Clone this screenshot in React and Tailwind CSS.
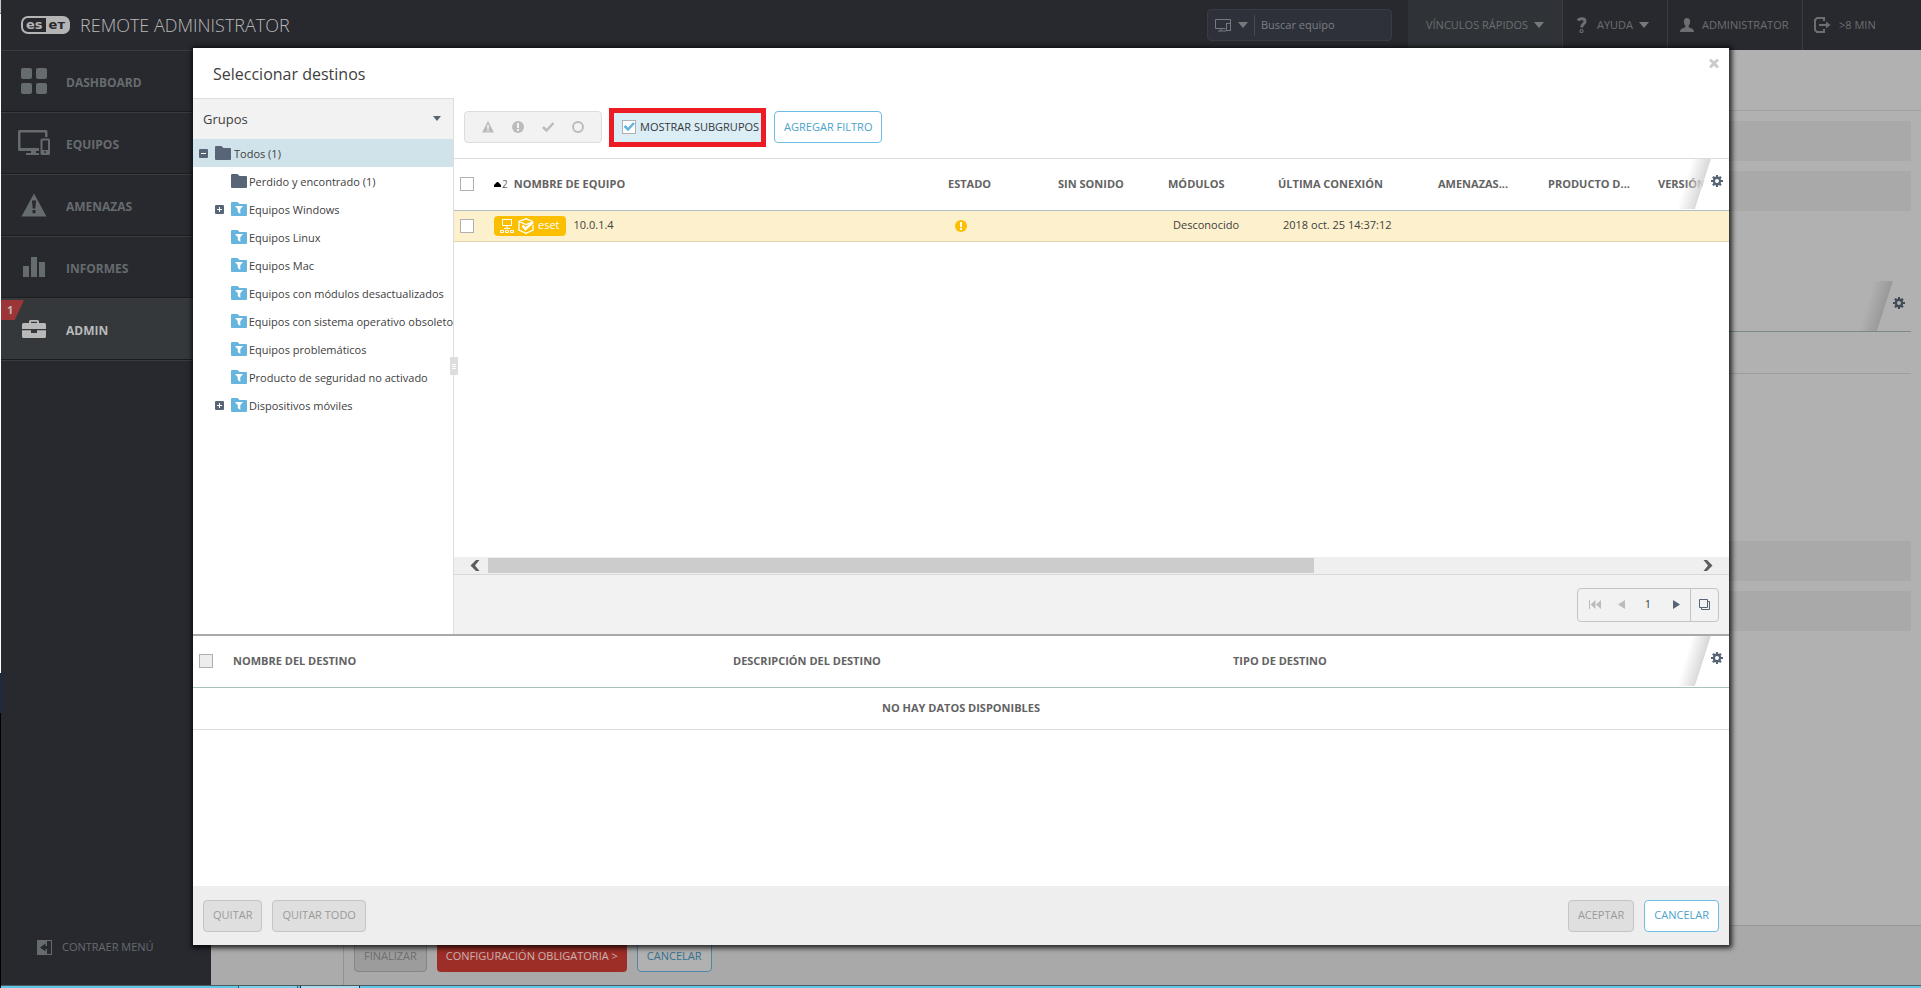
import React, { useState } from 'react';

const menuItems = [
    { label: 'DASHBOARD', icon: 'dashboard' },
    { label: 'EQUIPOS', icon: 'computers' },
    { label: 'AMENAZAS', icon: 'threats' },
    { label: 'INFORMES', icon: 'reports' },
    { label: 'ADMIN', icon: 'admin', badge: 1 }
];

const groups = [
    { name: 'Perdido y encontrado (1)' },
    { name: 'Equipos Windows', dynamic: true, expandable: true },
    { name: 'Equipos Linux', dynamic: true },
    { name: 'Equipos Mac', dynamic: true },
    { name: 'Equipos con módulos desactualizados', dynamic: true },
    { name: 'Equipos con sistema operativo obsoleto', dynamic: true },
    { name: 'Equipos problemáticos', dynamic: true },
    { name: 'Producto de seguridad no activado', dynamic: true },
    { name: 'Dispositivos móviles', dynamic: true, expandable: true }
];

const MenuIcon = ({ name }) => {
    if (name === 'dashboard') {
        return (
            <svg width="26" height="26" viewBox="0 0 26 26" fill="currentColor">
                <rect width="11" height="11" rx="2" />
                <rect x="15" width="11" height="11" rx="2" />
                <rect y="15" width="11" height="11" rx="2" />
                <rect x="15" y="15" width="11" height="11" rx="2" />
            </svg>
        );
    }
    if (name === 'computers') {
        return (
            <svg width="32" height="26" viewBox="0 0 32 26" fill="currentColor">
                <path fillRule="evenodd" d="M1.500 0H28a1.500 1.500 0 0 1 1.500 1.500V7h-2.500V2.500H2.500V18H21v3h-3v2h3v2H8v-2h5v-2H1.500A1.500 1.500 0 0 1 0 19.500V1.500A1.500 1.500 0 0 1 1.500 0Z" />
                <path fillRule="evenodd" d="M24 8.500h6.500A1.500 1.500 0 0 1 32 10v13.500a1.500 1.500 0 0 1-1.500 1.500H24a1.500 1.500 0 0 1-1.500-1.500V10A1.500 1.500 0 0 1 24 8.500Zm.5 2V20H30v-9.500Zm1.800 10.700v1.600h1.700v-1.600Z" />
            </svg>
        );
    }
    if (name === 'threats') {
        return (
            <svg width="26" height="24" viewBox="0 0 26 24" fill="currentColor">
                <path fillRule="evenodd" d="M13 .5 25.500 23.500H.5ZM11 7.500l.7 8h2.600l.7-8ZM11.500 17v3.200h3V17Z" />
            </svg>
        );
    }
    if (name === 'reports') {
        return (
            <svg width="22" height="20" viewBox="0 0 22 20" fill="currentColor">
                <path d="M0 9h6v11H0zM8 0h6v20H8zM16 5h6v15h-6z" />
            </svg>
        );
    }
    return (
        <svg width="24" height="18" viewBox="0 0 24 18" fill="currentColor">
            <path fillRule="evenodd" d="M7 3V1.500A1.500 1.500 0 0 1 8.500 0h7A1.500 1.500 0 0 1 17 1.500V3h5.500A1.500 1.500 0 0 1 24 4.500V9H0V4.500A1.500 1.500 0 0 1 1.500 3Zm2-1.200V3h6V1.800ZM0 10.200h9V13h6v-2.800h9v6.300a1.500 1.500 0 0 1-1.500 1.500h-21A1.500 1.500 0 0 1 0 16.500Z" />
        </svg>
    );
};

const Caret = () => (
    <svg width="10" height="6" viewBox="0 0 10 6" fill="#77797a">
        <path d="M0 0h10L5 6z" />
    </svg>
);

const Gear = ({ color }) => (
    <svg width="12" height="12" viewBox="0 0 12 12" fill={color}>
        <path fillRule="evenodd" d="M5 0h2v1.600l1 .4 1.200-1.100 1.500 1.500L9.600 3.700l.5 1.300H12v2h-1.900l-.5 1.200 1.100 1.300-1.500 1.500L8 9.900l-1 .5V12H5v-1.600l-1.100-.5-1.300 1.100-1.500-1.500 1.200-1.300L1.900 7H0V5h1.900l.4-1.300-1.200-1.300L2.600.9 3.900 2 5 1.600Zm1 4a2 2 0 1 0 0 4 2 2 0 0 0 0-4Z" />
    </svg>
);

// slanted corner that covers the end of a table header
const SettingsCorner = ({ id, face, shade, gear }) => (
    <div className="absolute top-0 right-0">
        <svg width="54" height="50" viewBox="0 0 54 50">
            <defs>
                <linearGradient id={id} gradientUnits="userSpaceOnUse" x1="11" y1="20" x2="28" y2="25">
                    <stop offset="0" stopColor={shade} stopOpacity="0" />
                    <stop offset="1" stopColor={shade} />
                </linearGradient>
            </defs>
            <path d="M17 0h19L20 50H1z" fill={`url(#${id})`} />
            <path d="M36 0h18v50H20z" fill={face} />
        </svg>
        <button aria-label="Configurar columnas" className="absolute top-4 right-1.5">
            <Gear color={gear} />
        </button>
    </div>
);

const Folder = ({ dynamic }) => (
    <svg width="16" height="14" viewBox="0 0 16 14">
        <path d="M0 1a1 1 0 0 1 1-1h5.500l2 2H15a1 1 0 0 1 1 1v10a1 1 0 0 1-1 1H1a1 1 0 0 1-1-1z" fill={dynamic ? '#66b5de' : '#586576'} />
        {dynamic && <path d="M4 4h8L9.300 7.300V12L6.800 10V7.300z" fill="#fff" />}
    </svg>
);

const Toggle = ({ open }) => (
    <svg width="9" height="9" viewBox="0 0 9 9">
        <rect width="9" height="9" rx="1" fill="#586576" />
        <path d={open ? 'M2 4h5v1H2z' : 'M2 4h2V2h1v2h2v1H5v2H4V5H2z'} fill="#fff" />
    </svg>
);

const Logo = () => (
    <div className="flex h-[18px] w-[49px] rounded-[7px] border-2 border-[#b4b4b4] bg-[#b4b4b4] font-['DejaVu_Sans',sans-serif] text-[13px] leading-[14px] font-bold">
        <span className="flex-1 rounded-l-[5px] bg-[#28292f] text-center text-[#b4b4b4]">es</span>
        <span className="flex-1 text-center text-[#28292f]">eт</span>
    </div>
);

const Header = () => (
    <header className="flex h-[50px] shrink-0 items-center bg-[#28292f] text-[11px] text-[#6b6f71]">
        <a href="#inicio" className="flex items-center gap-2.5 pl-5">
            <Logo />
            <span className="text-[18px] font-light text-[#b9b9b9]">REMOTE ADMINISTRATOR</span>
        </a>
        <div className="mr-4 ml-auto flex h-8 w-[185px] items-center rounded border border-[#393c42] bg-[#2e313a] pl-[7px]">
            <button aria-label="Tipo de búsqueda" className="flex items-center gap-1.5 border-r border-[#45484d] py-1 pr-1.5">
                <svg width="17" height="13" viewBox="0 0 17 13" fill="none" stroke="#777a7c">
                    <path d="M15.500 4V.5H.5v9h10M3 12h8M6 10v2" />
                    <rect x="11.500" y="4.500" width="4" height="7" />
                </svg>
                <Caret />
            </button>
            <input aria-label="Buscar equipo" placeholder="Buscar equipo" className="w-full min-w-0 bg-transparent pl-1.5 placeholder:text-[#7c7e80] focus:outline-none" />
        </div>
        <button className="flex h-full w-[154px] items-center justify-center gap-1.5 bg-[#2f3337]">
            VÍNCULOS RÁPIDOS <Caret />
        </button>
        <button className="flex h-full w-[105px] items-center gap-1.5 border-l border-[#3a3c40] pl-3.5">
            <svg width="10" height="16" viewBox="0 0 10 16" className="mr-1" fill="none" stroke="currentColor" strokeWidth="3">
                <path d="M1 3.500C2.500 1 8 .8 8 4.200 8 7 4.700 7 4.700 10.500" />
                <circle cx="4.500" cy="14" r=".6" />
            </svg>
            AYUDA <Caret />
        </button>
        <button className="flex h-full w-[135px] items-center gap-2 border-l border-[#3a3c40] pl-3">
            <svg width="14" height="14" viewBox="0 0 14 14" fill="currentColor">
                <path d="M7 0c2 0 3.200 1.400 3.200 3.500S9.300 7 8.700 7.500v1.700C10 10.200 14 10 14 14H0c0-4 4-3.800 5.300-4.800V7.500C4.700 7 3.800 5.600 3.800 3.500S5 0 7 0Z" />
            </svg>
            ADMINISTRATOR
        </button>
        <button className="flex h-full w-[119px] items-center gap-2 border-l border-[#3a3c40] pl-[11px]">
            <svg width="17" height="16" viewBox="0 0 17 16" fill="none" stroke="currentColor" strokeWidth="2">
                <path d="M10 4V1H3L1 3v10l2 2h7v-3M5 8h8" />
                <path d="M12 4.500V11.500L16.500 8z" fill="currentColor" stroke="none" />
            </svg>
            &gt;8 MIN
        </button>
    </header>
);

const Sidebar = () => (
    <nav className="flex w-[210px] shrink-0 flex-col bg-[#28292f] text-xs text-[#666b6e]">
        {menuItems.map((item) => (
            <a
                key={item.label}
                href={`#${item.icon}`}
                className={`relative flex h-[62px] items-center border-t border-t-[#3a3c40] border-b border-b-[#1b1c20] font-bold ${item.badge ? 'bg-[#34383b] text-[#b9b9b9]' : ''}`}
            >
                {item.badge && (
                    <span className="absolute top-px left-0 h-5 w-[23px] bg-[#9b3538] pl-1.5 text-[11px] leading-5 text-[#c9b5b5] [clip-path:polygon(0_0,100%_0,60%_100%,0_100%)]">
                        {item.badge}
                    </span>
                )}
                <span className="flex w-[65px] justify-center">
                    <MenuIcon name={item.icon} />
                </span>
                <span className="pt-1">{item.label}</span>
            </a>
        ))}
        <div className="border-t border-[#3a3c40]" />
        <button className="mt-auto mb-[30px] flex items-center gap-2.5 pl-9 text-[11px]">
            <svg width="15" height="15" viewBox="0 0 15 15" fill="#666b6e">
                <path fillRule="evenodd" d="M0 0h15v15H0zM10 1v13h4V1zM8.500 3.500 3 7.500l5.500 4V9H10V6H8.500z" />
            </svg>
            CONTRAER MENÚ
        </button>
    </nav>
);

// the wizard that stays behind the dialog
const Wizard = () => (
    <main className="flex min-w-0 flex-1 bg-[#a9a9a9]">
        <div className="w-[132px] shrink-0 bg-[#ababab]" />
        <div className="flex min-w-0 flex-1 flex-col border-l border-[#939393]">
            <div className="flex-1 border-b border-[#989898] bg-[#b1b1b1]">
                <div className="h-[61px] border-b border-[#a0a0a0]" />
                <div className="mr-2.5">
                    <div className="mt-2.5 h-10 bg-[#a9a9a9]" />
                    <div className="mt-2.5 h-10 bg-[#a9a9a9]" />
                    <div className="relative mt-[70px] h-[51px] border-b border-[#7b8884]">
                        <SettingsCorner id="wizard-corner" face="#b1b1b1" shade="#999999" gear="#414c58" />
                    </div>
                    <div className="h-[42px] border-b border-[#9d9d9d]" />
                    <div className="mt-[167px] h-10 bg-[#a9a9a9]" />
                    <div className="mt-2.5 h-10 bg-[#a9a9a9]" />
                </div>
            </div>
            <div className="flex h-[59px] items-start gap-2.5 pt-3.5 pl-2.5 text-[11px]">
                <button className="h-8 rounded border border-[#858585] bg-[#9c9c9c] px-[9px] text-[#6e6e6e]">FINALIZAR</button>
                <button className="h-8 rounded bg-[#9c2d27] px-[9px] text-[#c9b5b4]">CONFIGURACIÓN OBLIGATORIA &gt;</button>
                <button className="h-8 rounded border border-[#4f87a5] bg-[#b1b1b1] px-[9px] text-[#33708f]">CANCELAR</button>
            </div>
        </div>
    </main>
);

const Checkbox = ({ label, ...props }) => (
    <input
        type="checkbox"
        aria-label={label}
        className="block size-3.5 appearance-none border border-[#b0b0b0] bg-white disabled:bg-[#ededed]"
        {...props}
    />
);

const GroupTree = () => (
    <aside className="relative flex w-[261px] shrink-0 flex-col border-r border-[#dddddd]">
        <div className="relative border-t border-[#dddddd] bg-[#f2f2f2]">
            <select aria-label="Grupos" className="h-10 w-full appearance-none px-2.5 pt-0.5 text-[13px] text-[#404040]">
                <option>Grupos</option>
            </select>
            <svg width="8" height="5" viewBox="0 0 8 5" className="pointer-events-none absolute top-[17px] right-3" fill="#586576">
                <path d="M0 0h8L4 5z" />
            </svg>
        </div>
        <ul className="text-[11px] whitespace-nowrap text-[#404040]">
            <li>
                <button className="flex h-7 w-full items-center bg-[#d0e3eb] pl-1.5">
                    <Toggle open />
                    <span className="mr-[3px] ml-[7px]">
                        <Folder />
                    </span>
                    <span className="pt-0.5">Todos (1)</span>
                </button>
            </li>
            {groups.map((group) => (
                <li key={group.name}>
                    <button className="flex h-7 w-full items-center pl-[22px]">
                        <span className="w-4">{group.expandable && <Toggle />}</span>
                        <span className="mr-0.5">
                            <Folder dynamic={group.dynamic} />
                        </span>
                        <span className="pt-0.5">{group.name}</span>
                    </button>
                </li>
            ))}
        </ul>
        <div className="absolute top-[259px] -right-[5px] flex h-[18px] w-2 flex-col items-center justify-center gap-px bg-[#dddddd]">
            <span className="h-px w-1 bg-white" />
            <span className="h-px w-1 bg-white" />
            <span className="h-px w-1 bg-white" />
        </div>
    </aside>
);

const Toolbar = () => {
    const [showSubgroups, setShowSubgroups] = useState(true);

    return (
        <div className="flex h-[61px] shrink-0 items-center border-b border-[#dddddd] pb-0.5 pl-2.5 text-[11px]">
            <div className="flex h-8 w-[138px] items-center justify-center gap-[18px] rounded border border-[#dddddd] bg-[#f2f2f2]">
                <button aria-label="Crítico">
                    <svg width="12" height="12" viewBox="0 0 12 12" fill="#bcbcbc">
                        <path fillRule="evenodd" d="M6 0 12 11.500H0ZM5 4l.3 4h1.400L7 4ZM5.200 8.700v1.500h1.600V8.700Z" />
                    </svg>
                </button>
                <button aria-label="Advertencia">
                    <svg width="12" height="12" viewBox="0 0 12 12">
                        <circle cx="6" cy="6" r="6" fill="#bcbcbc" />
                        <path d="M5 2h2v5H5zM5 8h2v2H5z" fill="#f2f2f2" />
                    </svg>
                </button>
                <button aria-label="Correcto">
                    <svg width="12" height="12" viewBox="0 0 12 12" fill="none" stroke="#bcbcbc" strokeWidth="2.500">
                        <path d="M1 6l3.500 3.500L11.500 2" />
                    </svg>
                </button>
                <button aria-label="Sin estado">
                    <svg width="12" height="12" viewBox="0 0 12 12" fill="none" stroke="#bcbcbc" strokeWidth="2">
                        <circle cx="6" cy="6" r="5" />
                    </svg>
                </button>
            </div>
            <label className="mr-2 ml-[7px] flex h-[39px] items-center gap-1 border-[5px] border-[#ed1c24] bg-[#dbedf5] pr-0.5 pl-2 text-[#34383c]">
                <span className="relative">
                    <input
                        type="checkbox"
                        checked={showSubgroups}
                        onChange={(e) => setShowSubgroups(e.target.checked)}
                        className="block size-3.5 appearance-none border border-[#b0b0b0] bg-white"
                    />
                    {showSubgroups && (
                        <svg width="12" height="12" viewBox="0 0 12 12" className="pointer-events-none absolute top-px left-px" fill="none" stroke="#5fb4e0" strokeWidth="2.500">
                            <path d="M1.500 5l3.500 3.500L11 2" />
                        </svg>
                    )}
                </span>
                MOSTRAR SUBGRUPOS
            </label>
            <button className="h-8 rounded border border-[#6ebde3] px-[9px] text-[#4aa3ca]">AGREGAR FILTRO</button>
        </div>
    );
};

const ComputersTable = () => (
    <div className="relative flex-1 overflow-hidden">
        <table className="w-full table-fixed text-left text-[11px] whitespace-nowrap text-[#404040]">
            <colgroup>
                <col className="w-10" />
                <col />
                <col className="w-[110px]" />
                <col className="w-[110px]" />
                <col className="w-[110px]" />
                <col className="w-40" />
                <col className="w-[110px]" />
                <col className="w-[110px]" />
                <col className="w-[71px]" />
            </colgroup>
            <thead>
                <tr className="h-[51px] border-b border-[#b0bfc2] text-[#636363]">
                    <th className="pl-1.5">
                        <Checkbox label="Seleccionar todo" />
                    </th>
                    <th>
                        <span className="flex items-center">
                            <svg width="7" height="5" viewBox="0 0 7 5">
                                <path d="M3 0h1l3 3v2H0V3z" fill="#000" />
                            </svg>
                            <span className="mr-1.5 ml-px text-[10px] font-normal">2</span>
                            NOMBRE DE EQUIPO
                        </span>
                    </th>
                    <th>ESTADO</th>
                    <th>SIN SONIDO</th>
                    <th>MÓDULOS</th>
                    <th>ÚLTIMA CONEXIÓN</th>
                    <th>AMENAZAS...</th>
                    <th>PRODUCTO D...</th>
                    <th>VERSIÓN</th>
                </tr>
            </thead>
            <tbody>
                <tr className="h-[31px] border-b border-[#dfd4ab] bg-[#fdf0cc]">
                    <td className="pl-1.5">
                        <Checkbox label="Seleccionar 10.0.1.4" />
                    </td>
                    <td>
                        <span className="flex items-center gap-2">
                            <span className="flex h-5 items-center gap-1 rounded bg-[#fbbf00] px-1.5 text-white">
                                <svg width="14" height="14" viewBox="0 0 14 14" fill="none" stroke="#fff">
                                    <path d="M2.500.5h9v6h-9zM7 7v2M4 9.500h6M.5 11.500h3v2h-3zM5.500 11.500h3v2h-3zM10.500 11.500h3v2h-3z" />
                                </svg>
                                <svg width="16" height="16" viewBox="0 0 16 16" fill="none" stroke="#fff" strokeWidth="1.300">
                                    <path d="M15 7v5l-7 3.300L1 12V3.500L8 .8l7 2.700M1 3.500 8 6.500l5-2" />
                                    <path d="M4.500 7.500 7.500 11 15 4" strokeWidth="2.500" />
                                </svg>
                                eset
                            </span>
                            10.0.1.4
                        </span>
                    </td>
                    <td className="pl-[7px]">
                        <svg width="12" height="12" viewBox="0 0 12 12">
                            <circle cx="6" cy="6" r="6" fill="#fbbf00" />
                            <path d="M5 2h2v5H5zM5 8h2v2H5z" fill="#fff" />
                        </svg>
                    </td>
                    <td />
                    <td className="pl-[5px]">Desconocido</td>
                    <td className="pl-[5px]">2018 oct. 25 14:37:12</td>
                    <td />
                    <td />
                    <td />
                </tr>
            </tbody>
        </table>
        <SettingsCorner id="computers-corner" face="#ffffff" shade="#d8d8d8" gear="#566476" />
    </div>
);

const ScrollBar = () => (
    <div className="flex h-[18px] shrink-0 items-center border-b border-[#d8d8d8] bg-[#efefef] px-4">
        <button aria-label="Desplazar a la izquierda" className="mr-2">
            <svg width="10" height="11" viewBox="0 0 10 11" fill="#5d5d5d">
                <path d="M6 0h3.500L5 5.500 9.500 11H6L.5 5.500z" />
            </svg>
        </button>
        <div className="flex-1">
            <div className="h-[15px] w-[68%] bg-[#cccccc]" />
        </div>
        <button aria-label="Desplazar a la derecha">
            <svg width="10" height="11" viewBox="0 0 10 11" fill="#5d5d5d">
                <path d="M4 0H.5L5 5.500.5 11H4l5.500-5.500z" />
            </svg>
        </button>
    </div>
);

const Pager = () => (
    <div className="flex h-[59px] shrink-0 items-center justify-end bg-[#f2f2f2] pr-2.5 text-[11px]">
        <div className="flex h-[34px] items-center rounded border border-[#c4c4c4]">
            <button aria-label="Primera página" className="w-[33px] pl-[11px]">
                <svg width="12" height="9" viewBox="0 0 12 9" fill="#bcbcbc">
                    <path d="M0 0h1v9H0zM6.500 0v9L1.500 4.500zM12 0v9L7 4.500z" />
                </svg>
            </button>
            <button aria-label="Página anterior" className="flex w-5 justify-center">
                <svg width="7" height="9" viewBox="0 0 7 9" fill="#bcbcbc">
                    <path d="M7 0v9L0 4.500z" />
                </svg>
            </button>
            <span className="w-[34px] text-center text-[#404040]">1</span>
            <button aria-label="Página siguiente" className="flex h-full w-[26px] items-center border-r border-[#c4c4c4] pl-2">
                <svg width="7" height="9" viewBox="0 0 7 9" fill="#566476">
                    <path d="M0 0v9l7-4.500z" />
                </svg>
            </button>
            <button aria-label="Abrir en otra ventana" className="flex w-[27px] justify-center">
                <svg width="11" height="11" viewBox="0 0 11 11" fill="none" stroke="#566476">
                    <path d="M.5.500h8v8h-8zM2.500 8.500v2h8v-8h-2" />
                </svg>
            </button>
        </div>
    </div>
);

const TargetsTable = () => (
    <div className="relative flex-1">
        <table className="w-full table-fixed text-left text-[11px] text-[#636363]">
            <colgroup>
                <col className="w-10" />
                <col className="w-[500px]" />
                <col className="w-[500px]" />
                <col />
            </colgroup>
            <thead>
                <tr className="h-[51px] border-b border-[#a9c0bf]">
                    <th className="pl-1.5">
                        <Checkbox label="Seleccionar todos los destinos" disabled />
                    </th>
                    <th>NOMBRE DEL DESTINO</th>
                    <th>DESCRIPCIÓN DEL DESTINO</th>
                    <th>TIPO DE DESTINO</th>
                </tr>
            </thead>
            <tbody>
                <tr className="h-[42px] border-b border-[#dddddd]">
                    <td colSpan={4} className="text-center font-bold">
                        NO HAY DATOS DISPONIBLES
                    </td>
                </tr>
            </tbody>
        </table>
        <SettingsCorner id="targets-corner" face="#ffffff" shade="#d8d8d8" gear="#566476" />
    </div>
);

const SelectTargetsDialog = () => (
    <div
        role="dialog"
        aria-label="Seleccionar destinos"
        className="absolute top-12 right-48 bottom-[43px] left-[193px] flex flex-col bg-white shadow-[1px_1px_5px_2px_rgba(0,0,0,0.8)]"
    >
        <div className="flex h-[50px] shrink-0 items-center justify-between pr-2.5 pl-5">
            <h2 className="pt-0.5 text-base text-[#404040]">Seleccionar destinos</h2>
            <button aria-label="Cerrar" className="mb-5">
                <svg width="10" height="9" viewBox="0 0 10 9" stroke="#cccccc" strokeWidth="3">
                    <path d="M1 .5l8 8M9 .5l-8 8" />
                </svg>
            </button>
        </div>
        <div className="flex h-[538px] shrink-0 border-b-2 border-[#a9a9a9]">
            <GroupTree />
            <section className="flex min-w-0 flex-1 flex-col">
                <Toolbar />
                <ComputersTable />
                <ScrollBar />
                <Pager />
            </section>
        </div>
        <TargetsTable />
        <footer className="flex h-[59px] shrink-0 items-center gap-2.5 bg-[#eeeeee] px-2.5 text-[11px]">
            <button disabled className="h-8 rounded border border-[#c4c4c4] bg-[#dfdfdf] px-[9px] text-[#9a9a9a]">QUITAR</button>
            <button disabled className="h-8 rounded border border-[#c4c4c4] bg-[#dfdfdf] px-[9px] text-[#9a9a9a]">QUITAR TODO</button>
            <button disabled className="ml-auto h-8 rounded border border-[#c4c4c4] bg-[#dfdfdf] px-[9px] text-[#9a9a9a]">ACEPTAR</button>
            <button className="h-8 rounded border border-[#6ebde3] bg-white px-[9px] text-[#4aa3ca]">CANCELAR</button>
        </footer>
    </div>
);

const App = () => {
    return (
        <div className="relative flex h-screen overflow-hidden font-['Open_Sans','Noto_Sans',sans-serif]">
            <div className="flex w-px shrink-0 flex-col bg-white">
                <div className="h-3.5 border-b border-[#707070] bg-[#c8c8c8]" />
                <div className="mt-auto h-10 bg-[#0f2d50]" />
                <div className="h-[275px] bg-black" />
            </div>
            <div className="flex min-w-0 flex-1 flex-col">
                <Header />
                <div className="flex min-h-0 flex-1">
                    <Sidebar />
                    <Wizard />
                </div>
                <div className="flex h-[3px] shrink-0 border-t border-[#4d5a5e] bg-[#5fc8e8] pl-[237px]">
                    <div className="w-[60px] border-x border-[#3a5a68] bg-[#7ccfe8]" />
                    <div className="ml-0.5 w-[60px] border-x border-[#223] bg-[#a5dcee]" />
                </div>
            </div>
            <SelectTargetsDialog />
        </div>
    );
};

export default App;
